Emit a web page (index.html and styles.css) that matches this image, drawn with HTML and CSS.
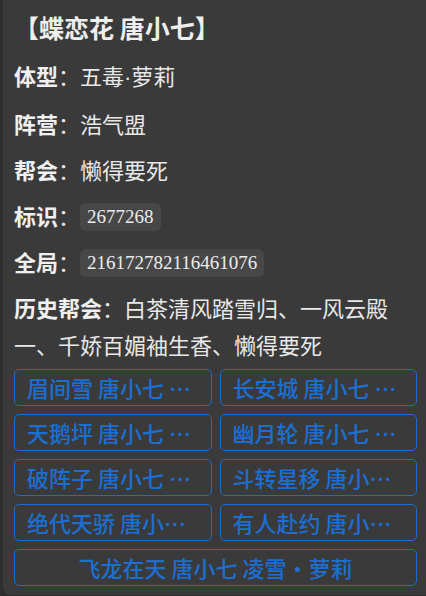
FILE: index.html
```html
<!doctype html>
<html>
<head>
    <meta charset="utf-8"/>
    <meta name="viewport" content="width=device-width,initial-scale=1.0" />
    <title>蝶恋花 唐小七</title>
    <link rel="stylesheet" href="styles.css">
</head>
<body>

<div class="card">
    <h1 class="title">【蝶恋花 唐小七】</h1>
    <div class="row"><b>体型</b>：五毒<span class="dot">·</span>萝莉</div>
    <div class="row"><b>阵营</b>：浩气盟</div>
    <div class="row"><b>帮会</b>：懒得要死</div>
    <div class="row"><b>标识</b>：<span class="code">2677268</span></div>
    <div class="row"><b>全局</b>：<span class="code">216172782116461076</span></div>
    <div class="row"><b>历史帮会</b>：白茶清风踏雪归、一风云殿一、千娇百媚袖生香、懒得要死</div>

    <div class="roles">
        <a class="role">眉间雪 唐小七 凌雪・萝莉</a>
        <a class="role">长安城 唐小七 凌雪・萝莉</a>
        <a class="role">天鹅坪 唐小七 凌雪・萝莉</a>
        <a class="role">幽月轮 唐小七 凌雪・萝莉</a>
        <a class="role">破阵子 唐小七 凌雪・萝莉</a>
        <a class="role">斗转星移 唐小七 凌雪・萝莉</a>
        <a class="role">绝代天骄 唐小七 凌雪・萝莉</a>
        <a class="role">有人赴约 唐小七 凌雪・萝莉</a>
        <a class="role wide">飞龙在天 唐小七 凌雪・萝莉</a>
    </div>
</div>

</body>
</html>
```

FILE: styles.css
```css
*{margin:0;padding:0;box-sizing:border-box}
html,body{background:#2d2d2d;overflow:hidden}
body{font-family:"Noto Sans CJK SC","Noto Sans",sans-serif;font-size:22px;color:#e8e8e8}

.card{width:435px;margin-left:3px;padding:9px 21px 9px 11px;background:#3a3a3a;border-radius:0 0 0 8px}
.title{font-size:25px;font-weight:bold;line-height:37px;margin-bottom:11px;color:#eee}
.row{line-height:37px;margin-bottom:9px}
.row b{color:#f0f0f0}
.dot{font-family:"Liberation Sans",sans-serif}
.code{display:inline-block;vertical-align:middle;line-height:28px;padding:0 7px;border-radius:6px;background:#474747;font-family:"Liberation Serif",serif;font-size:19px;color:#ececec;margin-top:-4px}

.roles{display:grid;grid-template-columns:1fr 1fr;gap:8px;margin-top:-3px}
.role{display:block;height:37px;line-height:35px;padding:0 12px;border:1px solid #1a6ccf;border-radius:5px;color:#1c6fd2;font-weight:500;text-align:center;white-space:nowrap;overflow:hidden;text-overflow:ellipsis;cursor:pointer}
.role.wide{grid-column:1 / -1}
```
